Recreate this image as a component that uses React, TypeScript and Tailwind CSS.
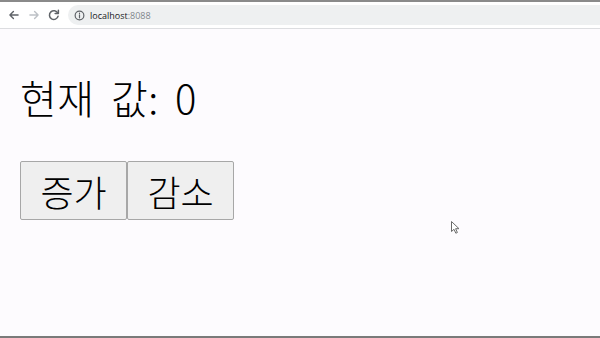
import { useState } from 'react';

const Chrome = () => (
    <div className="flex flex-col bg-white">
        <div className="h-[2px] bg-[#8a8a8a]" />
        <div className="flex items-center h-[26px] pl-[7px] gap-[6px]">
            <svg width="14" height="14" viewBox="0 0 24 24" fill="none" stroke="#5f6368" strokeWidth="2.4" strokeLinecap="round" strokeLinejoin="round">
                <path d="M19 12H5M11 6l-6 6 6 6" />
            </svg>
            <svg width="14" height="14" viewBox="0 0 24 24" fill="none" stroke="#bdc1c6" strokeWidth="2.4" strokeLinecap="round" strokeLinejoin="round">
                <path d="M5 12h14M13 6l6 6-6 6" />
            </svg>
            <svg width="14" height="14" viewBox="0 0 24 24" fill="none" stroke="#5f6368" strokeWidth="2.6" strokeLinecap="round">
                <path d="M18.5 9A7.5 7.5 0 1 0 19 14" />
                <path d="M19.5 4v5.5H14" strokeLinejoin="round" />
            </svg>
            <div className="flex-1 flex items-center h-[20px] rounded-l-full bg-[#eef0f1] pl-[6px] gap-[5px] ml-[1px]">
                <svg width="11" height="11" viewBox="0 0 24 24" fill="none" stroke="#5f6368" strokeWidth="2.6">
                    <circle cx="12" cy="12" r="9.5" />
                    <path d="M12 10.5v6.5M12 7v.5" strokeLinecap="round" />
                </svg>
                <span className="text-[9px] leading-none text-[#202124]" style={{ fontFamily: '"Open Sans", "Liberation Sans", sans-serif' }}>
                    localhost<span className="text-[#80868b]">:8088</span>
                </span>
            </div>
        </div>
        <div className="h-px bg-[#dcdde0]" />
    </div>
);

const App = () => {
    const [value, setValue] = useState(0);

    return (
        <div className="relative w-[600px] h-[338px] flex flex-col overflow-hidden bg-[#fdfbfe]" style={{ fontFamily: '"Noto Sans CJK KR", "Noto Sans", sans-serif' }}>
            <Chrome />
            <div className="flex-1 flex flex-col pl-[20px] pt-[38px]">
                <h1 className="text-[40px] leading-[60px] font-light tracking-[0.5px] [word-spacing:7px] text-black">현재 값: {value}</h1>
                <div className="flex mt-[34px]">
                    <button
                        className="w-[107px] h-[59px] text-[36px] leading-none font-light text-black bg-[#efefef] border border-[#a7a7a7] rounded-[2px]"
                        onClick={() => setValue((v) => v + 1)}
                    >
                        증가
                    </button>
                    <button
                        className="w-[107px] h-[59px] text-[36px] leading-none font-light text-black bg-[#efefef] border border-[#a7a7a7] rounded-[2px]"
                        onClick={() => setValue((v) => v - 1)}
                    >
                        감소
                    </button>
                </div>
            </div>
            <div className="h-[2px] bg-[#7a7a7a]" />
            {/* mouse pointer captured in the screenshot */}
            <svg className="absolute left-[451px] top-[221px]" width="9" height="13" viewBox="0 0 9 13" fill="white" stroke="#6b6b6b" strokeWidth="1">
                <path d="M0.5 0.5v10l2.5-2.2 1.8 3.9 1.6-.7-1.8-3.8h3.4z" strokeLinejoin="round" />
            </svg>
        </div>
    );
};

export default App;
